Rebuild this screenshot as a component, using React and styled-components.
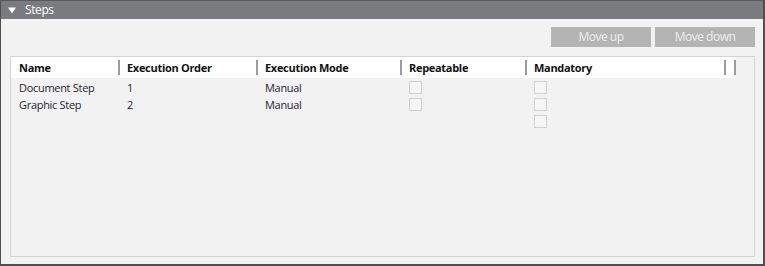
import React from 'react';
import styled, { createGlobalStyle } from 'styled-components';

const GlobalStyle = createGlobalStyle`
  html, body {
    margin: 0;
    padding: 0;
    background: #f2f2f2;
  }
  body {
    font-family: "Open Sans", "Noto Sans", Arial, sans-serif;
  }
`;

const columns = [
  { key: 'name', label: 'Name', width: 107, first: true },
  { key: 'order', label: 'Execution Order', width: 138 },
  { key: 'mode', label: 'Execution Mode', width: 144 },
  { key: 'repeatable', label: 'Repeatable', width: 125 },
  { key: 'mandatory', label: 'Mandatory', width: 199 },
  { key: 'filler', label: '', width: 10 },
  { key: 'end', label: '', width: 2 },
];

const steps = [
  { name: 'Document Step', order: '1', mode: 'Manual', repeatable: true, mandatory: true },
  { name: 'Graphic Step', order: '2', mode: 'Manual', repeatable: true, mandatory: true },
  { name: '', order: '', mode: '', repeatable: false, mandatory: true },
];

function Triangle() {
  return (
    <svg width="8" height="7" viewBox="0 0 8 7">
      <polygon points="0,0.5 8,0.5 4,6.5" fill="#ffffff" />
    </svg>
  );
}

function App() {
  return (
    <>
      <GlobalStyle />
      <Panel>
        <TitleBar>
          <Triangle />
          <Title>Steps</Title>
        </TitleBar>
        <Content>
          <Toolbar>
            <Button>Move up</Button>
            <Button>Move down</Button>
          </Toolbar>
          <Grid>
            <HeaderRow>
              {columns.map((c) => (
                <HeaderCell key={c.key} $w={c.width} $first={c.first} $empty={!c.label}>
                  {c.label}
                </HeaderCell>
              ))}
            </HeaderRow>
            <Body>
              {steps.map((s, i) => (
                <Row key={i}>
                  <Cell $w={107} $first>{s.name}</Cell>
                  <Cell $w={138}>{s.order}</Cell>
                  <Cell $w={144}>{s.mode}</Cell>
                  <Cell $w={125}>{s.repeatable && <Check />}</Cell>
                  <Cell $w={199}>{s.mandatory && <Check />}</Cell>
                </Row>
              ))}
            </Body>
          </Grid>
        </Content>
      </Panel>
    </>
  );
}

export default App;

const Panel = styled.div`
  width: 765px;
  height: 266px;
  box-sizing: border-box;
  border-top: 1px solid #5a5a5a;
  border-left: 1px solid #4f4f4f;
  border-right: 2px solid #4f4f4f;
  border-bottom: 2px solid #4f4f4f;
  background: #f2f2f2;
  display: flex;
  flex-direction: column;
`;

const TitleBar = styled.div`
  height: 18px;
  background: #797b7e;
  display: flex;
  align-items: center;
  padding-left: 7px;
  gap: 9px;
`;

const Title = styled.span`
  color: #ffffff;
  font-size: 12px;
  letter-spacing: -0.4px;
  line-height: 18px;
`;

const Content = styled.div`
  flex: 1;
  display: flex;
  flex-direction: column;
  padding: 8px 8px 7px 9px;
  gap: 9px;
  min-height: 0;
`;

const Toolbar = styled.div`
  display: flex;
  justify-content: flex-end;
  gap: 4px;
`;

const Button = styled.button`
  width: 100px;
  height: 20px;
  border: none;
  padding: 0;
  background: #b4b4b4;
  color: #eeeeee;
  font-family: inherit;
  font-size: 12px;
  letter-spacing: -0.5px;
  line-height: 20px;
`;

const Grid = styled.div`
  flex: 1;
  border: 1px solid #d4d4d4;
  display: flex;
  flex-direction: column;
`;

const HeaderRow = styled.div`
  display: flex;
  align-items: center;
  height: 21px;
  width: 725px;
  background: #ffffff;
`;

const HeaderCell = styled.div`
  box-sizing: border-box;
  flex: 0 0 ${(p) => p.$w}px;
  height: 15px;
  line-height: 15px;
  padding-left: ${(p) => (p.$empty ? 0 : p.$first ? 8 : 7)}px;
  border-left: ${(p) => (p.$first ? 'none' : '2px solid #9c9c9c')};
  font-size: 11px;
  font-weight: 700;
  letter-spacing: -0.3px;
  color: #111111;
  white-space: nowrap;
  overflow: hidden;
`;

const Body = styled.div`
  padding-top: 1px;
  display: flex;
  flex-direction: column;
`;

const Row = styled.div`
  display: flex;
  align-items: center;
  height: 17px;
`;

const Cell = styled.div`
  box-sizing: border-box;
  flex: 0 0 ${(p) => p.$w}px;
  padding-left: ${(p) => (p.$first ? 8 : 9)}px;
  font-size: 11px;
  letter-spacing: -0.3px;
  color: #1e2433;
  white-space: nowrap;
  display: flex;
  align-items: center;
`;

const Check = styled.span`
  display: block;
  width: 13px;
  height: 13px;
  box-sizing: border-box;
  border: 1px solid #d0d0d0;
  background: #f6f6f6;
`;
